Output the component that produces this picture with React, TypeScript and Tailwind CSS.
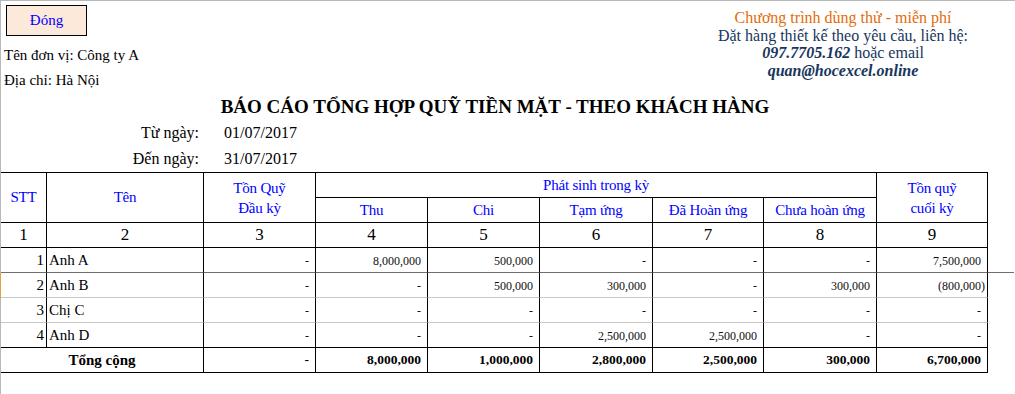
import React from "react";

type Row = { n: number; name: string; v: string[] };

const rows: Row[] = [
  { n: 1, name: "Anh A", v: ["-", "8,000,000", "500,000", "-", "-", "-", "7,500,000"] },
  { n: 2, name: "Anh B", v: ["-", "-", "500,000", "300,000", "-", "300,000", "(800,000)"] },
  { n: 3, name: "Chị C", v: ["-", "-", "-", "-", "-", "-", "-"] },
  { n: 4, name: "Anh D", v: ["-", "-", "-", "2,500,000", "2,500,000", "-", "-"] },
];

const totals = ["-", "8,000,000", "1,000,000", "2,800,000", "2,500,000", "300,000", "6,700,000"];

// bottom line colour of each data row, like the sheet shows it
const rowLine = ["border-b-[#6e6e6e]", "border-b-[#c8c8c8]", "border-b-[#c8c8c8]", "border-b-black"];

const head =
  "flex items-center justify-center text-center border-r border-b border-black text-[15px] tracking-[-0.2px] text-[#0000ff]";

export default function App() {
  return (
    <div className="w-[1015px] h-[394px] bg-white border-t border-l border-[#b9b9b9] font-['Liberation_Serif',serif] text-black">
      {/* top part */}
      <div className="flex h-[92px]">
        <div className="w-[692px] flex flex-col">
          <button className="mt-[4px] ml-[5px] w-[81px] h-[31px] bg-[#fde9d9] border border-black text-[15px] text-[#0000ff] flex items-center justify-center">
            Đóng
          </button>
          <div className="mt-[7px] pl-[3px] h-[25px] leading-[25px] text-[15px]">Tên đơn vị: Công ty A</div>
          <div className="pl-[3px] h-[25px] leading-[25px] text-[15px]">Địa chỉ: Hà Nội</div>
        </div>
        <div className="w-[300px] pt-[8px] text-center text-[16px] leading-[17.5px] text-[#17365d]">
          <div className="text-[#e46c0a]">Chương trình dùng thử - miễn phí</div>
          <div>Đặt hàng thiết kế theo yêu cầu, liên hệ:</div>
          <div>
            <span className="font-bold italic">097.7705.162</span> hoặc email
          </div>
          <div className="font-bold italic">quan@hocexcel.online</div>
        </div>
      </div>

      <div className="w-[988px] h-[27px] leading-[27px] text-center text-[19px] font-bold">
        BÁO CÁO TỔNG HỢP QUỸ TIỀN MẶT - THEO KHÁCH HÀNG
      </div>
      <div className="flex h-[26px] leading-[26px] text-[16px]">
        <div className="w-[198px] text-right">Từ ngày:</div>
        <div className="pl-[25px]">01/07/2017</div>
      </div>
      <div className="flex h-[26px] leading-[26px] text-[16px]">
        <div className="w-[198px] text-right">Đến ngày:</div>
        <div className="pl-[25px]">31/07/2017</div>
      </div>

      {/* table */}
      <div className="grid grid-cols-[46px_157px_112px_112px_112px_113px_111px_113px_111px_26px] grid-rows-[26px_25px_25px_25px_25px_25px_25px_25px]">
        <div className="col-start-10 row-start-1 row-span-3" />
        <div className="col-start-10 row-start-4 border-b border-[#6e6e6e]" />
        <div className="col-start-10 row-start-5 row-span-4" />

        <div className={`${head} row-span-2 border-t`}>STT</div>
        <div className={`${head} row-span-2 border-t`}>Tên</div>
        <div className={`${head} row-span-2 border-t leading-[20px]`}>
          Tồn Quỹ
          <br />
          Đầu kỳ
        </div>
        <div className={`${head} col-span-5 border-t`}>Phát sinh trong kỳ</div>
        <div className={`${head} row-span-2 border-t leading-[20px]`}>
          Tồn quỹ
          <br />
          cuối kỳ
        </div>
        <div className={head}>Thu</div>
        <div className={head}>Chi</div>
        <div className={head}>Tạm ứng</div>
        <div className={head}>Đã Hoàn ứng</div>
        <div className={head}>Chưa hoàn ứng</div>

        {[1, 2, 3, 4, 5, 6, 7, 8, 9].map((i) => (
          <div key={i} className="flex items-center justify-center border-r border-b border-black text-[17px]">
            {i}
          </div>
        ))}

        {rows.map((r, ri) => (
          <React.Fragment key={r.n}>
            <div
              className={`flex items-center justify-end pr-[2px] pt-[1px] border-r border-b border-r-black text-[15px] ${rowLine[ri]} ${
                r.n === 2 ? "shadow-[-1px_0_0_#e3a13a]" : ""
              }`}
            >
              {r.n}
            </div>
            <div className={`flex items-center pl-[2px] pt-[1px] border-r border-b border-r-black text-[15px] ${rowLine[ri]}`}>
              {r.name}
            </div>
            {r.v.map((v, vi) => (
              <div
                key={vi}
                className={`flex items-center justify-end pt-[2px] border-r border-b border-r-black text-[12px] text-[#111] ${rowLine[ri]} ${
                  v.startsWith("(") ? "pr-[2px]" : "pr-[6px]"
                }`}
              >
                {v}
              </div>
            ))}
          </React.Fragment>
        ))}

        <div className="col-span-2 flex items-center justify-center border-r border-b border-black text-[15px] font-bold">
          Tổng cộng
        </div>
        {totals.map((v, i) => (
          <div
            key={i}
            className="flex items-center justify-end pr-[6px] border-r border-b border-black text-[13.5px] font-bold"
          >
            {v}
          </div>
        ))}
      </div>
    </div>
  );
}
